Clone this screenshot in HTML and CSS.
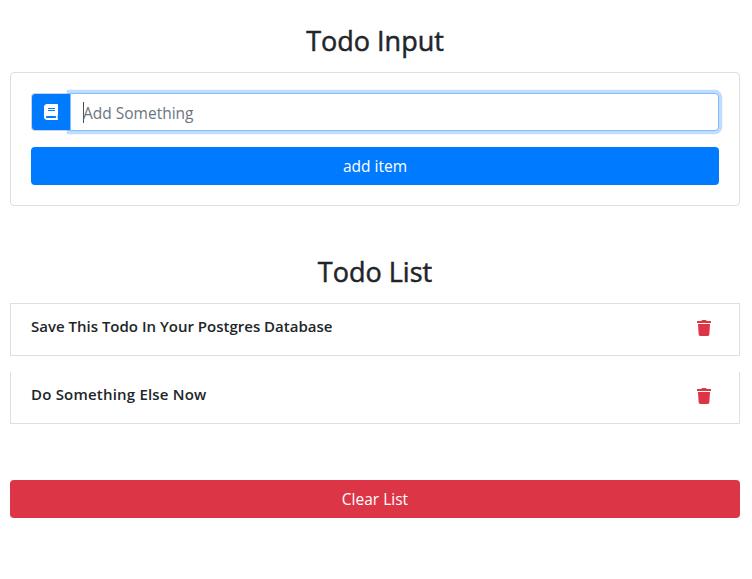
FILE: index.html
```html
<!DOCTYPE html>
<html lang="en">
<head>
<meta charset="utf-8">
<title>Todo</title>
<link rel="stylesheet" href="styles.css">
</head>
<body>
<main class="container">
  <h3 class="title">Todo Input</h3>
  <form class="card">
    <div class="input-group">
      <span class="prepend"><svg width="14" height="16" viewBox="0 0 448 512"><path fill="#fff" d="M448 360V24c0-13.300-10.700-24-24-24H96C43 0 0 43 0 96v320c0 53 43 96 96 96h328c13.300 0 24-10.700 24-24v-16c0-7.500-3.500-14.300-8.900-18.700-4.200-15.400-4.200-59.300 0-74.700 5.400-4.300 8.900-11.100 8.900-18.600zM128 134c0-3.300 2.700-6 6-6h212c3.300 0 6 2.700 6 6v20c0 3.300-2.700 6-6 6H134c-3.300 0-6-2.700-6-6v-20zm0 64c0-3.300 2.700-6 6-6h212c3.300 0 6 2.700 6 6v20c0 3.300-2.700 6-6 6H134c-3.300 0-6-2.700-6-6v-20zm253.400 250H96c-17.700 0-32-14.300-32-32 0-17.600 14.400-32 32-32h285.400c-1.900 17.100-1.900 46.900 0 64z"/></svg></span>
      <div class="field"><span class="caret"></span><span class="placeholder">Add Something</span></div>
    </div>
    <button type="button" class="btn primary">add item</button>
  </form>
  <h3 class="title list-title">Todo List</h3>
  <ul class="list">
    <li class="item first"><h6>Save This Todo In Your Postgres Database</h6><svg class="trash" width="14" height="16" viewBox="0 0 448 512"><path d="M432 32H312l-9.400-18.700A24 24 0 0 0 281.100 0H166.800a23.700 23.700 0 0 0-21.400 13.300L136 32H16A16 16 0 0 0 0 48v32a16 16 0 0 0 16 16h416a16 16 0 0 0 16-16V48a16 16 0 0 0-16-16zM32 128l21.200 339a48 48 0 0 0 47.900 45h245.800a48 48 0 0 0 47.900-45L416 128z"/></svg></li>
    <li class="item second"><h6>Do Something Else Now</h6><svg class="trash" width="14" height="16" viewBox="0 0 448 512"><path d="M432 32H312l-9.400-18.700A24 24 0 0 0 281.100 0H166.800a23.700 23.700 0 0 0-21.400 13.300L136 32H16A16 16 0 0 0 0 48v32a16 16 0 0 0 16 16h416a16 16 0 0 0 16-16V48a16 16 0 0 0-16-16zM32 128l21.200 339a48 48 0 0 0 47.900 45h245.800a48 48 0 0 0 47.900-45L416 128z"/></svg></li>
  </ul>
  <button type="button" class="btn danger">Clear List</button>
</main>
</body>
</html>
```
FILE: styles.css
```css
* { box-sizing: border-box; }
body { margin: 0; background: #fff; color: #212529; font: 400 15.5px/24px "Segoe UI", "Open Sans", "Noto Sans", sans-serif; }
.container { padding: 24px 12px 0 10px; }
h3, h6, ul { margin: 0; padding: 0; }
.title { height: 34px; margin-bottom: 14px; text-align: center; font-size: 27px; line-height: 34px; font-weight: 400; -webkit-text-stroke: .5px #212529; }
.card { height: 134px; padding: 20px; border: 1px solid #dfdfdf; border-radius: 4px; }
.input-group { display: flex; height: 38px; margin-bottom: 16px; }
.prepend { width: 40px; display: flex; align-items: center; justify-content: center; background: #007bff; border: 1px solid #ced4da; border-radius: 4px 0 0 4px; }
.field { flex: 1; display: flex; align-items: center; margin-left: -1px; padding-left: 12px; background: #fff; border: 1px solid #80bdff; border-radius: 0 4px 4px 0; box-shadow: 0 0 0 3.2px rgba(0,123,255,.25); }
.caret { width: 1px; height: 21px; background: #495057; }
.placeholder { margin-left: -1px; padding-top: 2px; color: #6c757d; }
.btn { display: block; width: 100%; height: 38px; padding: 0; border: 0; border-radius: 4px; color: #fff; font: inherit; }
.primary { background: #007bff; }
.danger { background: #dc3545; margin-top: 56px; }
.list-title { margin-top: 49px; }
.list { list-style: none; }
.item { height: 52px; margin-bottom: 16px; padding: 12px 28px 0 20px; display: flex; justify-content: space-between; border: 1px solid #dfdfdf; border-top: 0; }
.item.first { height: 53px; border-top: 1px solid #dfdfdf; }
h6 { font-size: 15px; line-height: 20px; font-weight: 600; }
.second h6 { letter-spacing: .2px; }
.trash { margin-top: 4px; fill: #dc3545; }
```
